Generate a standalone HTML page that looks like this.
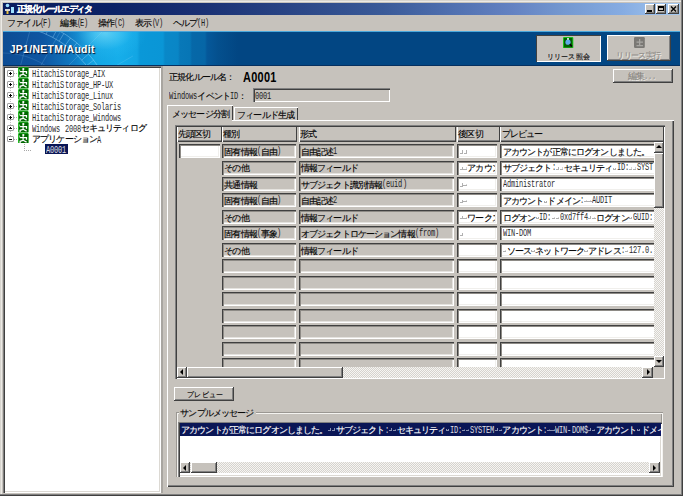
<!DOCTYPE html>
<html><head><meta charset="utf-8"><title>正規化ルールエディタ</title><style>
*{margin:0;padding:0;box-sizing:border-box}
html,body{width:683px;height:496px;overflow:hidden;background:#c6c2bc;font-family:"Liberation Sans",sans-serif;color:#000}
.a{position:absolute}
.t{position:absolute;white-space:nowrap;line-height:10px;height:10px}
.p{position:absolute;white-space:nowrap;line-height:1}
.t i{display:inline-block;font-style:normal;width:var(--fw);transform:translateY(var(--cy,0px));-webkit-text-stroke:.12px currentColor}
.t b{display:inline-block;font-weight:inherit;width:var(--hw);font-family:"Liberation Mono",monospace;font-size:var(--as);transform:translateY(var(--ay,-.5px)) scaleX(var(--ax));transform-origin:0 0;opacity:.85}
.t b.s{position:relative;transform:none;opacity:1}
.t b.s::before,.t b.s::after{content:"";position:absolute;box-sizing:border-box}
.t b.s1::before{left:.4px;top:3.4px;width:3px;height:3.4px;border-right:1px solid;border-bottom:1px solid}
.t b.s2::before{left:.2px;top:5.2px;width:3.4px;height:1px;border-top:1px solid}
.t b.s2::after{left:2.3px;top:4.1px;width:0;height:0;border-left:1.6px solid;border-top:1.5px solid transparent;border-bottom:1.5px solid transparent}
.t b.s3::before{left:.3px;top:4.6px;width:3.2px;height:2px;border:1px solid;border-top:0}
.track{background-color:#e8e6e2;background-image:repeating-conic-gradient(#d6d3ce 0 25%,#f6f5f2 0 50%);background-size:2px 2px}
.raised{background:#c6c2bc;box-shadow:inset -1px -1px #404040,inset 1px 1px #fff,inset -2px -2px #808080}
.sunk{box-shadow:inset 1px 1px #808080,inset 2px 2px #404040,inset -1px -1px #fff,inset -2px -2px #dcd9d3}
.cg{background:#c6c2bc;box-shadow:inset 1px 1px #404040,inset 2px 2px #8e8b86,inset -1px -1px #fff,inset -2px -2px #e4e2de}
.cw{background:#fff;box-shadow:inset 1px 1px #404040,inset 2px 2px #8e8b86,inset -1px -1px #fff,inset -2px -2px #f0efec}
.hd{background:#c6c2bc;box-shadow:inset 1px 0 #fff,inset -1px -1px #404040,inset 0 -2px #808080}
</style></head><body>
<div class="a" style="left:0.00px;top:0.00px;width:683.00px;height:496.00px;background:#c6c2bc;box-shadow:inset -1px -1px #404040,inset -2px -2px #808080,inset 1px 1px #d8d5cf,inset 2px 2px #eceae6"></div>
<div class="a" style="left:3.00px;top:3.00px;width:677.00px;height:12.00px;background:linear-gradient(90deg,#0a1c5e 0px,#0c2266 110px,#1a3174 200px,#2c4888 300px,#3a5a98 380px,#5070b0 450px,#6482c2 510px,#7498d0 560px,#86ace2 620px,#a6caf0 677px)"></div>
<svg class="a" style="left:4.00px;top:3.00px" width="11.00" height="11.00" viewBox="0 0 11 11" preserveAspectRatio="none"><circle cx="3.5" cy="2.5" r="1.8" fill="#9ee0ff"/><path d="M1 6h5v2H1z" fill="#d8d8d8"/><path d="M2.5 8h2v3h-2z" fill="#e8c040"/><path d="M7 4h3v6H7z" fill="#9ee0ff"/></svg>
<div class="t" style="left:17.00px;top:3.50px;--fw:7.400px;--hw:4.070px;font-size:8.60px;--as:10.30px;--ax:0.680;color:#fff;font-weight:bold"><i>正</i><i>規</i><i>化</i><i>ル</i><i>ー</i><i>ル</i><i>エ</i><i>デ</i><i>ィ</i><i>タ</i></div>
<div class="a raised" style="left:645.00px;top:4.00px;width:10.00px;height:10.00px;"></div>
<div class="a raised" style="left:655.50px;top:4.00px;width:10.00px;height:10.00px;"></div>
<div class="a raised" style="left:668.00px;top:4.00px;width:11.00px;height:10.00px;"></div>
<div class="a" style="left:647.30px;top:10.30px;width:4.50px;height:1.60px;background:#000"></div>
<div class="a" style="left:657.80px;top:5.60px;width:5.80px;height:5.40px;border:1px solid #000;border-top-width:2px"></div>
<svg class="a" style="left:670.00px;top:5.50px" width="7.00" height="6.00" viewBox="0 0 7 6" preserveAspectRatio="none"><path d="M1 0.5L6 5.5M6 0.5L1 5.5" stroke="#000" stroke-width="1.4"/></svg>
<div class="t" style="left:7.20px;top:17.80px;--fw:8.150px;--hw:3.700px;font-size:8.60px;--as:10.30px;--ax:0.680"><i>フ</i><i>ァ</i><i>イ</i><i>ル</i><b>(</b><b>F</b><b>)</b></div>
<div class="t" style="left:60.40px;top:17.80px;--fw:8.150px;--hw:3.700px;font-size:8.60px;--as:10.30px;--ax:0.680"><i>編</i><i>集</i><b>(</b><b>E</b><b>)</b></div>
<div class="t" style="left:97.60px;top:17.80px;--fw:8.150px;--hw:3.700px;font-size:8.60px;--as:10.30px;--ax:0.680"><i>操</i><i>作</i><b>(</b><b>C</b><b>)</b></div>
<div class="t" style="left:135.30px;top:17.80px;--fw:8.150px;--hw:3.700px;font-size:8.60px;--as:10.30px;--ax:0.680"><i>表</i><i>示</i><b>(</b><b>V</b><b>)</b></div>
<div class="t" style="left:172.90px;top:17.80px;--fw:8.150px;--hw:3.700px;font-size:8.60px;--as:10.30px;--ax:0.680"><i>ヘ</i><i>ル</i><i>プ</i><b>(</b><b>H</b><b>)</b></div>
<div class="a" style="left:3.00px;top:30.50px;width:677.00px;height:35.00px;background:linear-gradient(90deg,#0d4c94 0,#0e56a2 40px,#0f7cc4 72px,#14a6e4 92px,#16aeea 115px,#12a6e4 134px,#0a98d8 137px,#0a96d6 160px,#0988c8 162px,#0986c6 175px,#0878b8 177px,#0776b6 187px,#0668a8 189px,#0666a6 202px,#05589a 204px,#04508e 215px,#024683 235px,#024683 677px)"></div>
<div class="a" style="left:3.00px;top:30.50px;width:200.00px;height:35.00px;background:radial-gradient(ellipse 42px 26px at 102px 2px,rgba(150,235,255,.55),rgba(60,200,250,.15) 65%,rgba(0,0,0,0) 100%)"></div>
<svg class="a" style="left:3.00px;top:30.50px" width="200.00" height="35.00" viewBox="0 0 200 35" preserveAspectRatio="none"><g fill="none" stroke="#a8e0ff" stroke-width="1"><circle cx="0" cy="100" r="106" stroke-opacity=".4"/><circle cx="0" cy="100" r="115" stroke-opacity=".4"/><path d="M7.4 -5.7L8.0 -14.7M14.8 -5.0L16.0 -13.9M22.0 -3.7L23.9 -12.5M29.2 -1.9L31.7 -10.5M36.3 0.4L39.3 -8.1M43.1 3.2L46.8 -5.1M49.8 6.4L54.0 -1.5M56.2 10.1L60.9 2.5M62.3 14.2L67.6 7.0M68.1 18.8L73.9 11.9M73.6 23.7L79.9 17.3M78.8 29.1L85.5 23.0M83.5 34.7L90.6 29.2M87.9 40.7L95.3 35.7M91.8 47.0L99.6 42.5M95.3 53.5L103.4 49.6M98.3 60.3L106.6 56.9M100.8 67.2L109.4 64.5M102.9 74.4L111.6 72.2" stroke-opacity=".35"/><path d="M10.4 61.4L38.8 -44.9M20.0 65.4L75.0 -29.9M28.3 71.7L106.1 -6.1M34.6 80.0L129.9 25.0" stroke-opacity=".18"/><circle cx="0" cy="100" r="78" stroke-opacity=".15"/></g></svg>
<div class="a" style="left:3.00px;top:30.50px;width:677.00px;height:1.00px;background:#4aa8dc"></div>
<div class="a" style="left:3.00px;top:64.80px;width:677.00px;height:0.80px;background:#063060"></div>
<div class="p" style="left:9.70px;top:45.20px;font-size:10.40px;font-family:'Liberation Sans',sans-serif;letter-spacing:0.350px;color:#fff;font-weight:bold;text-shadow:1px 1px 1px #001030">JP1/NETM/Audit</div>
<div class="a" style="left:536.30px;top:34.90px;width:65.00px;height:27.60px;background:#c6c2bc;box-shadow:inset 1px 1px #404040,inset -1px -1px #fff"></div>
<svg class="a" style="left:563.40px;top:37.00px" width="10.30" height="11.40" viewBox="0 0 10.3 11.4" preserveAspectRatio="none"><rect width="10.3" height="11.4" rx="1" fill="#18c018"/><rect x="1" y="1" width="8.3" height="9.4" fill="#046004"/><circle cx="5" cy="5.2" r="2.6" fill="#5fa8e8"/><path d="M6.8 7L9 9.5" stroke="#000" stroke-width="1.4"/><rect x="4.2" y="1" width="1.6" height="1.8" fill="#fff"/></svg>
<div class="t" style="left:546.60px;top:52.20px;--fw:7.300px;--hw:4.070px;font-size:7.40px;--as:10.30px;--ax:0.680;-webkit-text-stroke:.2px #000"><i>リ</i><i>リ</i><i>ー</i><i>ス</i><i>照</i><i>会</i></div>
<div class="a raised" style="left:607.00px;top:34.60px;width:64.00px;height:26.80px;"></div>
<svg class="a" style="left:634.00px;top:36.80px" width="10.80" height="10.90" viewBox="0 0 10.8 10.9" preserveAspectRatio="none"><rect width="10.8" height="10.9" rx="1.2" fill="#7a7874"/><path d="M5 2h1.3v2.5H9v1.2H6.3V8H9v1.2H2.5V8h2.5V5.7H2.5V4.5h2.5z" fill="#a8a6a2"/></svg>
<div class="t" style="left:616.30px;top:50.50px;--fw:7.400px;--hw:4.070px;font-size:7.60px;--as:10.30px;--ax:0.680;color:#8e8b86;text-shadow:1px 1px 0 #f4f2ee"><i>リ</i><i>リ</i><i>ー</i><i>ス</i><i>実</i><i>行</i></div>
<div class="a" style="left:3.00px;top:66.00px;width:158.00px;height:427.00px;background:#fff;box-shadow:inset 1px 1px #808080,inset 2px 2px #404040,inset -1px -1px #fff,inset -2px -2px #dcd9d3"></div>
<div class="a" style="left:7.10px;top:70.40px;width:6.50px;height:6.20px;border:1px solid #a0a0a0;border-radius:1px;background:#fff"></div>
<div class="a" style="left:9.10px;top:73.10px;width:2.60px;height:0.90px;background:#000"></div>
<div class="a" style="left:10.00px;top:72.20px;width:0.90px;height:2.60px;background:#000"></div>
<div class="a" style="left:13.70px;top:73.40px;width:4.50px;height:1.00px;background:repeating-linear-gradient(90deg,#b0b0b0 0 1px,transparent 1px 2px)"></div>
<div class="a" style="left:10.00px;top:76.70px;width:1.00px;height:4.60px;background:repeating-linear-gradient(180deg,#c0c0c0 0 1px,transparent 1px 2px)"></div>
<svg class="a" style="left:18.30px;top:67.30px" width="10.60" height="10.60" viewBox="0 0 10.6 10.6" preserveAspectRatio="none"><rect width="10.6" height="10.6" rx="1.2" fill="#28c828"/><rect x="0.9" y="0.5" width="9.4" height="9.8" rx=".6" fill="#006600"/><circle cx="5.3" cy="2.1" r="1.15" fill="#fff"/><path d="M1.8 4.6H8.5V6.8M5.1 3.3V7.3L2.1 8.3V10M5.1 7.3L8.6 9.1" stroke="#fff" stroke-width="1.25" fill="none"/><path d="M1.8 4.4L1.5 2.5" stroke="#a8e0a8" stroke-width=".9"/></svg>
<div class="t" style="left:32.00px;top:69.10px;--fw:8.150px;--hw:4.070px;font-size:8.60px;--as:10.30px;--ax:0.680;--cy:-1.00px"><b>H</b><b>i</b><b>t</b><b>a</b><b>c</b><b>h</b><b>i</b><b>S</b><b>t</b><b>o</b><b>r</b><b>a</b><b>g</b><b>e</b><b>_</b><b>A</b><b>I</b><b>X</b></div>
<div class="a" style="left:7.10px;top:81.33px;width:6.50px;height:6.20px;border:1px solid #a0a0a0;border-radius:1px;background:#fff"></div>
<div class="a" style="left:9.10px;top:84.03px;width:2.60px;height:0.90px;background:#000"></div>
<div class="a" style="left:10.00px;top:83.13px;width:0.90px;height:2.60px;background:#000"></div>
<div class="a" style="left:13.70px;top:84.33px;width:4.50px;height:1.00px;background:repeating-linear-gradient(90deg,#b0b0b0 0 1px,transparent 1px 2px)"></div>
<div class="a" style="left:10.00px;top:87.63px;width:1.00px;height:4.60px;background:repeating-linear-gradient(180deg,#c0c0c0 0 1px,transparent 1px 2px)"></div>
<svg class="a" style="left:18.30px;top:78.23px" width="10.60" height="10.60" viewBox="0 0 10.6 10.6" preserveAspectRatio="none"><rect width="10.6" height="10.6" rx="1.2" fill="#28c828"/><rect x="0.9" y="0.5" width="9.4" height="9.8" rx=".6" fill="#006600"/><circle cx="5.3" cy="2.1" r="1.15" fill="#fff"/><path d="M1.8 4.6H8.5V6.8M5.1 3.3V7.3L2.1 8.3V10M5.1 7.3L8.6 9.1" stroke="#fff" stroke-width="1.25" fill="none"/><path d="M1.8 4.4L1.5 2.5" stroke="#a8e0a8" stroke-width=".9"/></svg>
<div class="t" style="left:32.00px;top:80.03px;--fw:8.150px;--hw:4.070px;font-size:8.60px;--as:10.30px;--ax:0.680;--cy:-1.00px"><b>H</b><b>i</b><b>t</b><b>a</b><b>c</b><b>h</b><b>i</b><b>S</b><b>t</b><b>o</b><b>r</b><b>a</b><b>g</b><b>e</b><b>_</b><b>H</b><b>P</b><b>-</b><b>U</b><b>X</b></div>
<div class="a" style="left:7.10px;top:92.26px;width:6.50px;height:6.20px;border:1px solid #a0a0a0;border-radius:1px;background:#fff"></div>
<div class="a" style="left:9.10px;top:94.96px;width:2.60px;height:0.90px;background:#000"></div>
<div class="a" style="left:10.00px;top:94.06px;width:0.90px;height:2.60px;background:#000"></div>
<div class="a" style="left:13.70px;top:95.26px;width:4.50px;height:1.00px;background:repeating-linear-gradient(90deg,#b0b0b0 0 1px,transparent 1px 2px)"></div>
<div class="a" style="left:10.00px;top:98.56px;width:1.00px;height:4.60px;background:repeating-linear-gradient(180deg,#c0c0c0 0 1px,transparent 1px 2px)"></div>
<svg class="a" style="left:18.30px;top:89.16px" width="10.60" height="10.60" viewBox="0 0 10.6 10.6" preserveAspectRatio="none"><rect width="10.6" height="10.6" rx="1.2" fill="#28c828"/><rect x="0.9" y="0.5" width="9.4" height="9.8" rx=".6" fill="#006600"/><circle cx="5.3" cy="2.1" r="1.15" fill="#fff"/><path d="M1.8 4.6H8.5V6.8M5.1 3.3V7.3L2.1 8.3V10M5.1 7.3L8.6 9.1" stroke="#fff" stroke-width="1.25" fill="none"/><path d="M1.8 4.4L1.5 2.5" stroke="#a8e0a8" stroke-width=".9"/></svg>
<div class="t" style="left:32.00px;top:90.96px;--fw:8.150px;--hw:4.070px;font-size:8.60px;--as:10.30px;--ax:0.680;--cy:-1.00px"><b>H</b><b>i</b><b>t</b><b>a</b><b>c</b><b>h</b><b>i</b><b>S</b><b>t</b><b>o</b><b>r</b><b>a</b><b>g</b><b>e</b><b>_</b><b>L</b><b>i</b><b>n</b><b>u</b><b>x</b></div>
<div class="a" style="left:7.10px;top:103.19px;width:6.50px;height:6.20px;border:1px solid #a0a0a0;border-radius:1px;background:#fff"></div>
<div class="a" style="left:9.10px;top:105.89px;width:2.60px;height:0.90px;background:#000"></div>
<div class="a" style="left:10.00px;top:104.99px;width:0.90px;height:2.60px;background:#000"></div>
<div class="a" style="left:13.70px;top:106.19px;width:4.50px;height:1.00px;background:repeating-linear-gradient(90deg,#b0b0b0 0 1px,transparent 1px 2px)"></div>
<div class="a" style="left:10.00px;top:109.49px;width:1.00px;height:4.60px;background:repeating-linear-gradient(180deg,#c0c0c0 0 1px,transparent 1px 2px)"></div>
<svg class="a" style="left:18.30px;top:100.09px" width="10.60" height="10.60" viewBox="0 0 10.6 10.6" preserveAspectRatio="none"><rect width="10.6" height="10.6" rx="1.2" fill="#28c828"/><rect x="0.9" y="0.5" width="9.4" height="9.8" rx=".6" fill="#006600"/><circle cx="5.3" cy="2.1" r="1.15" fill="#fff"/><path d="M1.8 4.6H8.5V6.8M5.1 3.3V7.3L2.1 8.3V10M5.1 7.3L8.6 9.1" stroke="#fff" stroke-width="1.25" fill="none"/><path d="M1.8 4.4L1.5 2.5" stroke="#a8e0a8" stroke-width=".9"/></svg>
<div class="t" style="left:32.00px;top:101.89px;--fw:8.150px;--hw:4.070px;font-size:8.60px;--as:10.30px;--ax:0.680;--cy:-1.00px"><b>H</b><b>i</b><b>t</b><b>a</b><b>c</b><b>h</b><b>i</b><b>S</b><b>t</b><b>o</b><b>r</b><b>a</b><b>g</b><b>e</b><b>_</b><b>S</b><b>o</b><b>l</b><b>a</b><b>r</b><b>i</b><b>s</b></div>
<div class="a" style="left:7.10px;top:114.12px;width:6.50px;height:6.20px;border:1px solid #a0a0a0;border-radius:1px;background:#fff"></div>
<div class="a" style="left:9.10px;top:116.82px;width:2.60px;height:0.90px;background:#000"></div>
<div class="a" style="left:10.00px;top:115.92px;width:0.90px;height:2.60px;background:#000"></div>
<div class="a" style="left:13.70px;top:117.12px;width:4.50px;height:1.00px;background:repeating-linear-gradient(90deg,#b0b0b0 0 1px,transparent 1px 2px)"></div>
<div class="a" style="left:10.00px;top:120.42px;width:1.00px;height:4.60px;background:repeating-linear-gradient(180deg,#c0c0c0 0 1px,transparent 1px 2px)"></div>
<svg class="a" style="left:18.30px;top:111.02px" width="10.60" height="10.60" viewBox="0 0 10.6 10.6" preserveAspectRatio="none"><rect width="10.6" height="10.6" rx="1.2" fill="#28c828"/><rect x="0.9" y="0.5" width="9.4" height="9.8" rx=".6" fill="#006600"/><circle cx="5.3" cy="2.1" r="1.15" fill="#fff"/><path d="M1.8 4.6H8.5V6.8M5.1 3.3V7.3L2.1 8.3V10M5.1 7.3L8.6 9.1" stroke="#fff" stroke-width="1.25" fill="none"/><path d="M1.8 4.4L1.5 2.5" stroke="#a8e0a8" stroke-width=".9"/></svg>
<div class="t" style="left:32.00px;top:112.82px;--fw:8.150px;--hw:4.070px;font-size:8.60px;--as:10.30px;--ax:0.680;--cy:-1.00px"><b>H</b><b>i</b><b>t</b><b>a</b><b>c</b><b>h</b><b>i</b><b>S</b><b>t</b><b>o</b><b>r</b><b>a</b><b>g</b><b>e</b><b>_</b><b>W</b><b>i</b><b>n</b><b>d</b><b>o</b><b>w</b><b>s</b></div>
<div class="a" style="left:7.10px;top:125.05px;width:6.50px;height:6.20px;border:1px solid #a0a0a0;border-radius:1px;background:#fff"></div>
<div class="a" style="left:9.10px;top:127.75px;width:2.60px;height:0.90px;background:#000"></div>
<div class="a" style="left:10.00px;top:126.85px;width:0.90px;height:2.60px;background:#000"></div>
<div class="a" style="left:13.70px;top:128.05px;width:4.50px;height:1.00px;background:repeating-linear-gradient(90deg,#b0b0b0 0 1px,transparent 1px 2px)"></div>
<div class="a" style="left:10.00px;top:131.35px;width:1.00px;height:4.60px;background:repeating-linear-gradient(180deg,#c0c0c0 0 1px,transparent 1px 2px)"></div>
<svg class="a" style="left:18.30px;top:121.95px" width="10.60" height="10.60" viewBox="0 0 10.6 10.6" preserveAspectRatio="none"><rect width="10.6" height="10.6" rx="1.2" fill="#28c828"/><rect x="0.9" y="0.5" width="9.4" height="9.8" rx=".6" fill="#006600"/><circle cx="5.3" cy="2.1" r="1.15" fill="#fff"/><path d="M1.8 4.6H8.5V6.8M5.1 3.3V7.3L2.1 8.3V10M5.1 7.3L8.6 9.1" stroke="#fff" stroke-width="1.25" fill="none"/><path d="M1.8 4.4L1.5 2.5" stroke="#a8e0a8" stroke-width=".9"/></svg>
<div class="t" style="left:32.00px;top:123.75px;--fw:8.150px;--hw:4.070px;font-size:8.60px;--as:10.30px;--ax:0.680;--cy:-1.00px"><b>W</b><b>i</b><b>n</b><b>d</b><b>o</b><b>w</b><b>s</b><b>&nbsp;</b><b>2</b><b>0</b><b>0</b><b>8</b><i>セ</i><i>キ</i><i>ュ</i><i>リ</i><i>テ</i><i>ィ</i><i>ロ</i><i>グ</i></div>
<div class="a" style="left:7.10px;top:135.98px;width:6.50px;height:6.20px;border:1px solid #a0a0a0;border-radius:1px;background:#fff"></div>
<div class="a" style="left:9.10px;top:138.68px;width:2.60px;height:0.90px;background:#000"></div>
<div class="a" style="left:13.70px;top:138.98px;width:4.50px;height:1.00px;background:repeating-linear-gradient(90deg,#b0b0b0 0 1px,transparent 1px 2px)"></div>
<svg class="a" style="left:18.30px;top:132.88px" width="10.60" height="10.60" viewBox="0 0 10.6 10.6" preserveAspectRatio="none"><rect width="10.6" height="10.6" rx="1.2" fill="#28c828"/><rect x="0.9" y="0.5" width="9.4" height="9.8" rx=".6" fill="#006600"/><circle cx="5.3" cy="2.1" r="1.15" fill="#fff"/><path d="M1.8 4.6H8.5V6.8M5.1 3.3V7.3L2.1 8.3V10M5.1 7.3L8.6 9.1" stroke="#fff" stroke-width="1.25" fill="none"/><path d="M1.8 4.4L1.5 2.5" stroke="#a8e0a8" stroke-width=".9"/></svg>
<div class="t" style="left:32.00px;top:134.68px;--fw:8.150px;--hw:4.070px;font-size:8.60px;--as:10.30px;--ax:0.680;--cy:-1.00px"><i>ア</i><i>プ</i><i>リ</i><i>ケ</i><i>ー</i><i>シ</i><i>ョ</i><i>ン</i><b>A</b></div>
<div class="a" style="left:23.50px;top:144.00px;width:1.00px;height:6.00px;background:repeating-linear-gradient(180deg,#a8a8a8 0 1px,transparent 1px 2px)"></div>
<div class="a" style="left:23.50px;top:149.50px;width:8.00px;height:1.00px;background:repeating-linear-gradient(90deg,#a8a8a8 0 1px,transparent 1px 2px)"></div>
<div class="a" style="left:45.00px;top:144.30px;width:23.00px;height:10.00px;background:#0a1656"></div>
<div class="t" style="left:46.20px;top:145.00px;--fw:8.150px;--hw:4.070px;font-size:8.60px;--as:10.30px;--ax:0.680;color:#fff"><b>A</b><b>0</b><b>0</b><b>0</b><b>1</b></div>
<div class="a" style="left:161.00px;top:66.00px;width:1.60px;height:427.00px;background:#a8a5a0"></div>
<div class="t" style="left:169.20px;top:71.50px;--fw:8.150px;--hw:4.070px;font-size:8.60px;--as:10.30px;--ax:0.680"><i>正</i><i>規</i><i>化</i><i>ル</i><i>ー</i><i>ル</i><i>名</i><i>：</i></div>
<div class="p" style="left:243.00px;top:69.60px;font-size:14.00px;font-family:'Liberation Sans',sans-serif;letter-spacing:0.400px;font-weight:bold;transform:scaleX(.78);transform-origin:0 0">A0001</div>
<div class="t" style="left:169.00px;top:90.50px;--fw:8.150px;--hw:4.070px;font-size:8.60px;--as:10.30px;--ax:0.680"><b>W</b><b>i</b><b>n</b><b>d</b><b>o</b><b>w</b><b>s</b><i>イ</i><i>ベ</i><i>ン</i><i>ト</i><b>I</b><b>D</b><i>：</i></div>
<div class="a" style="left:253.20px;top:88.00px;width:136.80px;height:13.70px;box-shadow:inset 1px 1px #808080,inset 2px 2px #404040,inset -1px -1px #fff"></div>
<div class="t" style="left:254.50px;top:90.80px;--fw:8.150px;--hw:4.070px;font-size:8.60px;--as:10.30px;--ax:0.680"><b>0</b><b>0</b><b>0</b><b>1</b></div>
<div class="a raised" style="left:612.80px;top:68.70px;width:60.00px;height:14.60px;"></div>
<div class="t" style="left:628.00px;top:70.50px;--fw:8.150px;--hw:4.070px;font-size:8.60px;--as:10.30px;--ax:0.680;color:#85827d;text-shadow:1px 1px 0 #f4f2ee"><i>編</i><i>集</i><b>.</b><b>.</b><b>.</b></div>
<div class="a" style="left:167.30px;top:105.30px;width:66.00px;height:16.00px;background:#c6c2bc;box-shadow:inset 1px 1px #fff,inset -1px 0 #404040"></div>
<div class="t" style="left:172.00px;top:109.00px;--fw:8.150px;--hw:4.070px;font-size:8.60px;--as:10.30px;--ax:0.680"><i>メ</i><i>ッ</i><i>セ</i><i>ー</i><i>ジ</i><i>分</i><i>割</i></div>
<div class="a" style="left:233.50px;top:107.00px;width:64.00px;height:13.00px;background:#c6c2bc;box-shadow:inset 1px 1px #fff,inset -1px 0 #404040"></div>
<div class="t" style="left:237.20px;top:109.80px;--fw:8.150px;--hw:4.070px;font-size:8.60px;--as:10.30px;--ax:0.680"><i>フ</i><i>ィ</i><i>ー</i><i>ル</i><i>ド</i><i>生</i><i>成</i></div>
<div class="a" style="left:167.00px;top:120.00px;width:507.00px;height:367.00px;box-shadow:inset 1px 1px #fff,inset -1px -1px #404040,inset -2px -2px #808080"></div>
<div class="a" style="left:168.30px;top:119.50px;width:64.00px;height:2.00px;background:#c6c2bc"></div>
<div class="a sunk" style="left:175.00px;top:125.00px;width:490.00px;height:254.00px;"></div>
<div class="a hd" style="left:176.50px;top:126.50px;width:45.00px;height:15.00px;"></div>
<div class="t" style="left:178.00px;top:128.80px;--fw:8.150px;--hw:4.070px;font-size:8.60px;--as:10.30px;--ax:0.680"><i>先</i><i>頭</i><i>区</i><i>切</i></div>
<div class="a hd" style="left:221.60px;top:126.50px;width:75.90px;height:15.00px;"></div>
<div class="t" style="left:223.10px;top:128.80px;--fw:8.150px;--hw:4.070px;font-size:8.60px;--as:10.30px;--ax:0.680"><i>種</i><i>別</i></div>
<div class="a hd" style="left:298.50px;top:126.50px;width:157.50px;height:15.00px;"></div>
<div class="t" style="left:300.00px;top:128.80px;--fw:8.150px;--hw:4.070px;font-size:8.60px;--as:10.30px;--ax:0.680"><i>形</i><i>式</i></div>
<div class="a hd" style="left:456.80px;top:126.50px;width:43.20px;height:15.00px;"></div>
<div class="t" style="left:458.30px;top:128.80px;--fw:8.150px;--hw:4.070px;font-size:8.60px;--as:10.30px;--ax:0.680"><i>後</i><i>区</i><i>切</i></div>
<div class="a hd" style="left:500.00px;top:126.50px;width:164.00px;height:15.00px;"></div>
<div class="t" style="left:501.50px;top:128.80px;--fw:8.150px;--hw:4.070px;font-size:8.60px;--as:10.30px;--ax:0.680"><i>プ</i><i>レ</i><i>ビ</i><i>ュ</i><i>ー</i></div>
<div class="a" style="left:176.50px;top:142.00px;width:477px;height:224.8px;overflow:hidden">
<div class="a cw" style="left:2.10px;top:2.10px;width:41.20px;height:14.00px;"></div>
<div class="a cg" style="left:45.60px;top:2.10px;width:74.00px;height:14.00px;"></div>
<div class="a cg" style="left:122.00px;top:2.10px;width:155.50px;height:14.00px;"></div>
<div class="a cw" style="left:280.70px;top:2.10px;width:40.20px;height:14.00px;"></div>
<div class="a cw" style="left:323.90px;top:2.10px;width:170.00px;height:14.00px;"></div>
<div class="t" style="left:47.80px;top:4.90px;--fw:8.150px;--hw:4.070px;font-size:8.60px;--as:10.30px;--ax:0.680;--ay:-1.10px"><i>固</i><i>有</i><i>情</i><i>報</i><b>(</b><i>自</i><i>由</i><b>)</b></div>
<div class="t" style="left:124.30px;top:4.90px;--fw:8.150px;--hw:4.070px;font-size:8.60px;--as:10.30px;--ax:0.680;--ay:-1.10px"><i>自</i><i>由</i><i>記</i><i>述</i><b>1</b></div>
<div class="a" style="left:280.70px;top:2.10px;width:38px;height:14px;overflow:hidden">
<div class="t" style="left:2.00px;top:2.80px;--fw:8.150px;--hw:4.070px;font-size:8.60px;--as:10.30px;--ax:0.680;--ay:-1.10px"><b class="s s1" style="color:#b0b0b0">&nbsp;</b><b class="s s1" style="color:#b0b0b0">&nbsp;</b></div>
</div>
<div class="t" style="left:326.20px;top:4.90px;--fw:8.150px;--hw:4.070px;font-size:8.60px;--as:10.30px;--ax:0.680;--ay:-1.10px"><i>ア</i><i>カ</i><i>ウ</i><i>ン</i><i>ト</i><i>が</i><i>正</i><i>常</i><i>に</i><i>ロ</i><i>グ</i><i>オ</i><i>ン</i><i>し</i><i>ま</i><i>し</i><i>た</i><i>。</i></div>
<div class="a cg" style="left:45.60px;top:18.55px;width:74.00px;height:14.00px;"></div>
<div class="a cg" style="left:122.00px;top:18.55px;width:155.50px;height:14.00px;"></div>
<div class="a cw" style="left:280.70px;top:18.55px;width:40.20px;height:14.00px;"></div>
<div class="a cw" style="left:323.90px;top:18.55px;width:170.00px;height:14.00px;"></div>
<div class="t" style="left:47.80px;top:21.35px;--fw:8.150px;--hw:4.070px;font-size:8.60px;--as:10.30px;--ax:0.680;--ay:-1.10px"><i>そ</i><i>の</i><i>他</i></div>
<div class="t" style="left:124.30px;top:21.35px;--fw:8.150px;--hw:4.070px;font-size:8.60px;--as:10.30px;--ax:0.680;--ay:-1.10px"><i>情</i><i>報</i><i>フ</i><i>ィ</i><i>ー</i><i>ル</i><i>ド</i></div>
<div class="a" style="left:280.70px;top:18.55px;width:38px;height:14px;overflow:hidden">
<div class="t" style="left:2.00px;top:2.80px;--fw:8.150px;--hw:4.070px;font-size:8.60px;--as:10.30px;--ax:0.680;--ay:-1.10px"><b class="s s1" style="color:#b0b0b0">&nbsp;</b><b class="s s2" style="color:#b0b0b0">&nbsp;</b><i>ア</i><i>カ</i><i>ウ</i><i>ン</i></div>
</div>
<div class="t" style="left:326.20px;top:21.35px;--fw:8.150px;--hw:4.070px;font-size:8.60px;--as:10.30px;--ax:0.680;--ay:-1.10px"><i>サ</i><i>ブ</i><i>ジ</i><i>ェ</i><i>ク</i><i>ト</i><b>:</b><b class="s s1" style="color:#b0b0b0">&nbsp;</b><b class="s s2" style="color:#b0b0b0">&nbsp;</b><i>セ</i><i>キ</i><i>ュ</i><i>リ</i><i>テ</i><i>ィ</i><b class="s s3" style="color:#b0b0b0">&nbsp;</b><b>I</b><b>D</b><b>:</b><b class="s s2" style="color:#b0b0b0">&nbsp;</b><b class="s s2" style="color:#b0b0b0">&nbsp;</b><b>S</b><b>Y</b><b>S</b><b>T</b></div>
<div class="a cg" style="left:45.60px;top:35.00px;width:74.00px;height:14.00px;"></div>
<div class="a cg" style="left:122.00px;top:35.00px;width:155.50px;height:14.00px;"></div>
<div class="a cw" style="left:280.70px;top:35.00px;width:40.20px;height:14.00px;"></div>
<div class="a cw" style="left:323.90px;top:35.00px;width:170.00px;height:14.00px;"></div>
<div class="t" style="left:47.80px;top:37.80px;--fw:8.150px;--hw:4.070px;font-size:8.60px;--as:10.30px;--ax:0.680;--ay:-1.10px"><i>共</i><i>通</i><i>情</i><i>報</i></div>
<div class="t" style="left:124.30px;top:37.80px;--fw:8.150px;--hw:4.070px;font-size:8.60px;--as:10.30px;--ax:0.680;--ay:-1.10px"><i>サ</i><i>ブ</i><i>ジ</i><i>ェ</i><i>ク</i><i>ト</i><i>識</i><i>別</i><i>情</i><i>報</i><b>(</b><b>e</b><b>u</b><b>i</b><b>d</b><b>)</b></div>
<div class="a" style="left:280.70px;top:35.00px;width:38px;height:14px;overflow:hidden">
<div class="t" style="left:2.00px;top:2.80px;--fw:8.150px;--hw:4.070px;font-size:8.60px;--as:10.30px;--ax:0.680;--ay:-1.10px"><b class="s s1" style="color:#b0b0b0">&nbsp;</b><b class="s s2" style="color:#b0b0b0">&nbsp;</b></div>
</div>
<div class="t" style="left:326.20px;top:37.80px;--fw:8.150px;--hw:4.070px;font-size:8.60px;--as:10.30px;--ax:0.680;--ay:-1.10px"><b>A</b><b>d</b><b>m</b><b>i</b><b>n</b><b>i</b><b>s</b><b>t</b><b>r</b><b>a</b><b>t</b><b>o</b><b>r</b></div>
<div class="a cg" style="left:45.60px;top:51.45px;width:74.00px;height:14.00px;"></div>
<div class="a cg" style="left:122.00px;top:51.45px;width:155.50px;height:14.00px;"></div>
<div class="a cw" style="left:280.70px;top:51.45px;width:40.20px;height:14.00px;"></div>
<div class="a cw" style="left:323.90px;top:51.45px;width:170.00px;height:14.00px;"></div>
<div class="t" style="left:47.80px;top:54.25px;--fw:8.150px;--hw:4.070px;font-size:8.60px;--as:10.30px;--ax:0.680;--ay:-1.10px"><i>固</i><i>有</i><i>情</i><i>報</i><b>(</b><i>自</i><i>由</i><b>)</b></div>
<div class="t" style="left:124.30px;top:54.25px;--fw:8.150px;--hw:4.070px;font-size:8.60px;--as:10.30px;--ax:0.680;--ay:-1.10px"><i>自</i><i>由</i><i>記</i><i>述</i><b>2</b></div>
<div class="a" style="left:280.70px;top:51.45px;width:38px;height:14px;overflow:hidden">
<div class="t" style="left:2.00px;top:2.80px;--fw:8.150px;--hw:4.070px;font-size:8.60px;--as:10.30px;--ax:0.680;--ay:-1.10px"><b class="s s1" style="color:#b0b0b0">&nbsp;</b><b class="s s2" style="color:#b0b0b0">&nbsp;</b></div>
</div>
<div class="t" style="left:326.20px;top:54.25px;--fw:8.150px;--hw:4.070px;font-size:8.60px;--as:10.30px;--ax:0.680;--ay:-1.10px"><i>ア</i><i>カ</i><i>ウ</i><i>ン</i><i>ト</i><b class="s s3" style="color:#b0b0b0">&nbsp;</b><i>ド</i><i>メ</i><i>イ</i><i>ン</i><b>:</b><b class="s s2" style="color:#b0b0b0">&nbsp;</b><b class="s s2" style="color:#b0b0b0">&nbsp;</b><b>A</b><b>U</b><b>D</b><b>I</b><b>T</b></div>
<div class="a cg" style="left:45.60px;top:67.90px;width:74.00px;height:14.00px;"></div>
<div class="a cg" style="left:122.00px;top:67.90px;width:155.50px;height:14.00px;"></div>
<div class="a cw" style="left:280.70px;top:67.90px;width:40.20px;height:14.00px;"></div>
<div class="a cw" style="left:323.90px;top:67.90px;width:170.00px;height:14.00px;"></div>
<div class="t" style="left:47.80px;top:70.70px;--fw:8.150px;--hw:4.070px;font-size:8.60px;--as:10.30px;--ax:0.680;--ay:-1.10px"><i>そ</i><i>の</i><i>他</i></div>
<div class="t" style="left:124.30px;top:70.70px;--fw:8.150px;--hw:4.070px;font-size:8.60px;--as:10.30px;--ax:0.680;--ay:-1.10px"><i>情</i><i>報</i><i>フ</i><i>ィ</i><i>ー</i><i>ル</i><i>ド</i></div>
<div class="a" style="left:280.70px;top:67.90px;width:38px;height:14px;overflow:hidden">
<div class="t" style="left:2.00px;top:2.80px;--fw:8.150px;--hw:4.070px;font-size:8.60px;--as:10.30px;--ax:0.680;--ay:-1.10px"><b class="s s1" style="color:#b0b0b0">&nbsp;</b><b class="s s2" style="color:#b0b0b0">&nbsp;</b><i>ワ</i><i>ー</i><i>ク</i><i>ス</i></div>
</div>
<div class="t" style="left:326.20px;top:70.70px;--fw:8.150px;--hw:4.070px;font-size:8.60px;--as:10.30px;--ax:0.680;--ay:-1.10px"><i>ロ</i><i>グ</i><i>オ</i><i>ン</i><b class="s s3" style="color:#b0b0b0">&nbsp;</b><b>I</b><b>D</b><b>:</b><b class="s s2" style="color:#b0b0b0">&nbsp;</b><b class="s s2" style="color:#b0b0b0">&nbsp;</b><b>0</b><b>x</b><b>d</b><b>7</b><b>f</b><b>f</b><b>4</b><b class="s s1" style="color:#b0b0b0">&nbsp;</b><b class="s s2" style="color:#b0b0b0">&nbsp;</b><i>ロ</i><i>グ</i><i>オ</i><i>ン</i><b class="s s3" style="color:#b0b0b0">&nbsp;</b><b>G</b><b>U</b><b>I</b><b>D</b><b>:</b></div>
<div class="a cg" style="left:45.60px;top:84.35px;width:74.00px;height:14.00px;"></div>
<div class="a cg" style="left:122.00px;top:84.35px;width:155.50px;height:14.00px;"></div>
<div class="a cw" style="left:280.70px;top:84.35px;width:40.20px;height:14.00px;"></div>
<div class="a cw" style="left:323.90px;top:84.35px;width:170.00px;height:14.00px;"></div>
<div class="t" style="left:47.80px;top:87.15px;--fw:8.150px;--hw:4.070px;font-size:8.60px;--as:10.30px;--ax:0.680;--ay:-1.10px"><i>固</i><i>有</i><i>情</i><i>報</i><b>(</b><i>事</i><i>象</i><b>)</b></div>
<div class="t" style="left:124.30px;top:87.15px;--fw:8.150px;--hw:4.070px;font-size:8.60px;--as:10.30px;--ax:0.680;--ay:-1.10px"><i>オ</i><i>ブ</i><i>ジ</i><i>ェ</i><i>ク</i><i>ト</i><i>ロ</i><i>ケ</i><i>ー</i><i>シ</i><i>ョ</i><i>ン</i><i>情</i><i>報</i><b>(</b><b>f</b><b>r</b><b>o</b><b>m</b><b>)</b></div>
<div class="a" style="left:280.70px;top:84.35px;width:38px;height:14px;overflow:hidden">
<div class="t" style="left:2.00px;top:2.80px;--fw:8.150px;--hw:4.070px;font-size:8.60px;--as:10.30px;--ax:0.680;--ay:-1.10px"><b class="s s1" style="color:#b0b0b0">&nbsp;</b></div>
</div>
<div class="t" style="left:326.20px;top:87.15px;--fw:8.150px;--hw:4.070px;font-size:8.60px;--as:10.30px;--ax:0.680;--ay:-1.10px"><b>W</b><b>I</b><b>N</b><b>-</b><b>D</b><b>O</b><b>M</b></div>
<div class="a cg" style="left:45.60px;top:100.80px;width:74.00px;height:14.00px;"></div>
<div class="a cg" style="left:122.00px;top:100.80px;width:155.50px;height:14.00px;"></div>
<div class="a cw" style="left:280.70px;top:100.80px;width:40.20px;height:14.00px;"></div>
<div class="a cw" style="left:323.90px;top:100.80px;width:170.00px;height:14.00px;"></div>
<div class="t" style="left:47.80px;top:103.60px;--fw:8.150px;--hw:4.070px;font-size:8.60px;--as:10.30px;--ax:0.680;--ay:-1.10px"><i>そ</i><i>の</i><i>他</i></div>
<div class="t" style="left:124.30px;top:103.60px;--fw:8.150px;--hw:4.070px;font-size:8.60px;--as:10.30px;--ax:0.680;--ay:-1.10px"><i>情</i><i>報</i><i>フ</i><i>ィ</i><i>ー</i><i>ル</i><i>ド</i></div>
<div class="a" style="left:280.70px;top:100.80px;width:38px;height:14px;overflow:hidden">
<div class="t" style="left:2.00px;top:2.80px;--fw:8.150px;--hw:4.070px;font-size:8.60px;--as:10.30px;--ax:0.680;--ay:-1.10px"></div>
</div>
<div class="t" style="left:326.20px;top:103.60px;--fw:8.150px;--hw:4.070px;font-size:8.60px;--as:10.30px;--ax:0.680;--ay:-1.10px"><b class="s s2" style="color:#b0b0b0">&nbsp;</b><i>ソ</i><i>ー</i><i>ス</i><b class="s s3" style="color:#b0b0b0">&nbsp;</b><i>ネ</i><i>ッ</i><i>ト</i><i>ワ</i><i>ー</i><i>ク</i><b class="s s3" style="color:#b0b0b0">&nbsp;</b><i>ア</i><i>ド</i><i>レ</i><i>ス</i><b>:</b><b class="s s2" style="color:#b0b0b0">&nbsp;</b><b>1</b><b>2</b><b>7</b><b>.</b><b>0</b><b>.</b></div>
<div class="a cg" style="left:45.60px;top:117.25px;width:74.00px;height:14.00px;"></div>
<div class="a cg" style="left:122.00px;top:117.25px;width:155.50px;height:14.00px;"></div>
<div class="a cw" style="left:280.70px;top:117.25px;width:40.20px;height:14.00px;"></div>
<div class="a cw" style="left:323.90px;top:117.25px;width:170.00px;height:14.00px;"></div>
<div class="a cg" style="left:45.60px;top:133.70px;width:74.00px;height:14.00px;"></div>
<div class="a cg" style="left:122.00px;top:133.70px;width:155.50px;height:14.00px;"></div>
<div class="a cw" style="left:280.70px;top:133.70px;width:40.20px;height:14.00px;"></div>
<div class="a cw" style="left:323.90px;top:133.70px;width:170.00px;height:14.00px;"></div>
<div class="a cg" style="left:45.60px;top:150.15px;width:74.00px;height:14.00px;"></div>
<div class="a cg" style="left:122.00px;top:150.15px;width:155.50px;height:14.00px;"></div>
<div class="a cw" style="left:280.70px;top:150.15px;width:40.20px;height:14.00px;"></div>
<div class="a cw" style="left:323.90px;top:150.15px;width:170.00px;height:14.00px;"></div>
<div class="a cg" style="left:45.60px;top:166.60px;width:74.00px;height:14.00px;"></div>
<div class="a cg" style="left:122.00px;top:166.60px;width:155.50px;height:14.00px;"></div>
<div class="a cw" style="left:280.70px;top:166.60px;width:40.20px;height:14.00px;"></div>
<div class="a cw" style="left:323.90px;top:166.60px;width:170.00px;height:14.00px;"></div>
<div class="a cg" style="left:45.60px;top:183.05px;width:74.00px;height:14.00px;"></div>
<div class="a cg" style="left:122.00px;top:183.05px;width:155.50px;height:14.00px;"></div>
<div class="a cw" style="left:280.70px;top:183.05px;width:40.20px;height:14.00px;"></div>
<div class="a cw" style="left:323.90px;top:183.05px;width:170.00px;height:14.00px;"></div>
<div class="a cg" style="left:45.60px;top:199.50px;width:74.00px;height:14.00px;"></div>
<div class="a cg" style="left:122.00px;top:199.50px;width:155.50px;height:14.00px;"></div>
<div class="a cw" style="left:280.70px;top:199.50px;width:40.20px;height:14.00px;"></div>
<div class="a cw" style="left:323.90px;top:199.50px;width:170.00px;height:14.00px;"></div>
<div class="a cg" style="left:45.60px;top:215.95px;width:74.00px;height:14.00px;"></div>
<div class="a cg" style="left:122.00px;top:215.95px;width:155.50px;height:14.00px;"></div>
<div class="a cw" style="left:280.70px;top:215.95px;width:40.20px;height:14.00px;"></div>
<div class="a cw" style="left:323.90px;top:215.95px;width:170.00px;height:14.00px;"></div>
</div>
<div class="a track" style="left:653.50px;top:142.00px;width:10.50px;height:224.50px;"></div>
<div class="a raised" style="left:653.50px;top:142.00px;width:10.50px;height:10.50px;"></div>
<svg class="a" style="left:654.75px;top:143.25px" width="8.00" height="8.00" viewBox="0 0 8 8" preserveAspectRatio="none"><path d="M1 5h6L4 2z" fill="#000"/></svg>
<div class="a raised" style="left:653.50px;top:152.50px;width:10.50px;height:55.00px;"></div>
<div class="a raised" style="left:653.50px;top:356.00px;width:10.50px;height:10.50px;"></div>
<svg class="a" style="left:654.75px;top:357.25px" width="8.00" height="8.00" viewBox="0 0 8 8" preserveAspectRatio="none"><path d="M1 3h6L4 6z" fill="#000"/></svg>
<div class="a track" style="left:176.50px;top:366.80px;width:476.50px;height:11.00px;"></div>
<div class="a raised" style="left:176.70px;top:366.80px;width:10.50px;height:11.00px;"></div>
<svg class="a" style="left:177.95px;top:368.30px" width="8.00" height="8.00" viewBox="0 0 8 8" preserveAspectRatio="none"><path d="M5 1v6L2 4z" fill="#000"/></svg>
<div class="a raised" style="left:187.00px;top:366.80px;width:156.40px;height:11.00px;"></div>
<div class="a raised" style="left:642.40px;top:366.80px;width:10.60px;height:11.00px;"></div>
<svg class="a" style="left:643.70px;top:368.30px" width="8.00" height="8.00" viewBox="0 0 8 8" preserveAspectRatio="none"><path d="M3 1v6L6 4z" fill="#000"/></svg>
<div class="a" style="left:653.00px;top:366.50px;width:11.00px;height:11.50px;background:#c6c2bc"></div>
<div class="a raised" style="left:174.00px;top:387.00px;width:60.30px;height:14.20px;"></div>
<div class="t" style="left:187.00px;top:389.60px;--fw:7.250px;--hw:4.070px;font-size:7.20px;--as:10.30px;--ax:0.680;-webkit-text-stroke:.25px #000"><i>プ</i><i>レ</i><i>ビ</i><i>ュ</i><i>ー</i></div>
<div class="a" style="left:176.00px;top:411.50px;width:487.00px;height:65.50px;box-shadow:inset 1px 1px #9a9792,inset 2px 2px #f4f3f0,inset -1px -1px #f4f3f0,inset -2px -2px #9a9792"></div>
<div class="a" style="left:179.00px;top:407.00px;width:77.00px;height:10.00px;background:#c6c2bc"></div>
<div class="t" style="left:180.30px;top:408.00px;--fw:8.150px;--hw:4.070px;font-size:8.60px;--as:10.30px;--ax:0.680"><i>サ</i><i>ン</i><i>プ</i><i>ル</i><i>メ</i><i>ッ</i><i>セ</i><i>ー</i><i>ジ</i></div>
<div class="a sunk" style="left:178.00px;top:421.80px;width:484.00px;height:55.20px;background:#fff"></div>
<div class="a" style="left:180.00px;top:422.50px;width:480.50px;height:13.80px;background:#0a1656"></div>
<div class="a" style="left:180px;top:422.5px;width:480.5px;height:14px;overflow:hidden">
<div class="t" style="left:1.00px;top:2.00px;--fw:8.150px;--hw:4.070px;font-size:8.60px;--as:10.30px;--ax:0.680;color:#fff"><i>ア</i><i>カ</i><i>ウ</i><i>ン</i><i>ト</i><i>が</i><i>正</i><i>常</i><i>に</i><i>ロ</i><i>グ</i><i>オ</i><i>ン</i><i>し</i><i>ま</i><i>し</i><i>た</i><i>。</i><b class="s s1" style="color:#8890b0">&nbsp;</b><b class="s s1" style="color:#8890b0">&nbsp;</b><i>サ</i><i>ブ</i><i>ジ</i><i>ェ</i><i>ク</i><i>ト</i><b>:</b><b class="s s1" style="color:#8890b0">&nbsp;</b><b class="s s2" style="color:#8890b0">&nbsp;</b><i>セ</i><i>キ</i><i>ュ</i><i>リ</i><i>テ</i><i>ィ</i><b class="s s3" style="color:#8890b0">&nbsp;</b><b>I</b><b>D</b><b>:</b><b class="s s2" style="color:#8890b0">&nbsp;</b><b class="s s2" style="color:#8890b0">&nbsp;</b><b>S</b><b>Y</b><b>S</b><b>T</b><b>E</b><b>M</b><b class="s s1" style="color:#8890b0">&nbsp;</b><b class="s s2" style="color:#8890b0">&nbsp;</b><i>ア</i><i>カ</i><i>ウ</i><i>ン</i><i>ト</i><b>:</b><b class="s s2" style="color:#8890b0">&nbsp;</b><b class="s s2" style="color:#8890b0">&nbsp;</b><b>W</b><b>I</b><b>N</b><b>-</b><b>D</b><b>O</b><b>M</b><b>$</b><b class="s s1" style="color:#8890b0">&nbsp;</b><b class="s s2" style="color:#8890b0">&nbsp;</b><i>ア</i><i>カ</i><i>ウ</i><i>ン</i><i>ト</i><b class="s s3" style="color:#8890b0">&nbsp;</b><i>ド</i><i>メ</i><i>イ</i><i>ン</i></div>
</div>
<div class="a track" style="left:179.70px;top:462.20px;width:480.00px;height:11.20px;"></div>
<div class="a raised" style="left:179.70px;top:462.20px;width:10.80px;height:11.20px;"></div>
<svg class="a" style="left:181.10px;top:463.80px" width="8.00" height="8.00" viewBox="0 0 8 8" preserveAspectRatio="none"><path d="M5 1v6L2 4z" fill="#000"/></svg>
<div class="a raised" style="left:190.50px;top:462.20px;width:26.50px;height:11.20px;"></div>
<div class="a raised" style="left:649.30px;top:462.20px;width:10.30px;height:11.20px;"></div>
<svg class="a" style="left:650.45px;top:463.80px" width="8.00" height="8.00" viewBox="0 0 8 8" preserveAspectRatio="none"><path d="M3 1v6L6 4z" fill="#000"/></svg>
</body></html>
